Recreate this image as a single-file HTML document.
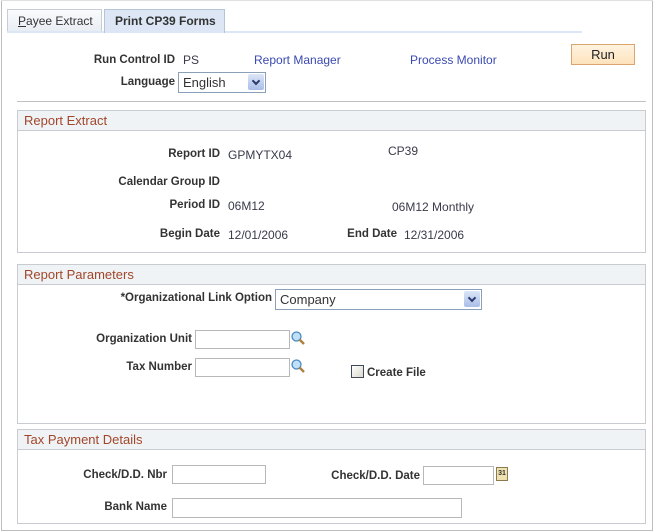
<!DOCTYPE html>
<html><head><meta charset="utf-8"><style>
*{margin:0;padding:0;box-sizing:border-box}
body{width:654px;height:532px;background:#fff;font-family:"Liberation Sans",Arial,sans-serif;font-size:12px;color:#333;position:relative;overflow:hidden}
.a{position:absolute;white-space:nowrap}
.l{position:absolute;white-space:nowrap;font-weight:bold;color:#333;text-align:right;font-size:11.5px;margin-top:1px}
.v{position:absolute;white-space:nowrap;color:#3a3a4a;font-size:12px}
.lk{position:absolute;white-space:nowrap;color:#3a4ab0}
.box{position:absolute;border:1px solid #c8cbcf;background:#fff}
.hd{position:absolute;left:0;right:0;top:0;height:20px;background:#eff3f5;border-bottom:1px solid #c8cbcf;color:#a2462a;font-size:13px;padding:2px 0 0 6px}
.in{position:absolute;border:1px solid #b8b8b8;background:#fff}
.sel{position:absolute;border:1px solid #8a9fb8;background:#fff;font-size:13px;color:#333;padding:2px 0 0 4px}
.dd{position:absolute;right:1px;top:1px;width:16px;height:16px;background:linear-gradient(#dde6f8,#a9bde8);border-radius:2px}
.dd:after{content:"";position:absolute;left:5px;top:4px;width:4px;height:4px;border-right:2px solid #2a3a6a;border-bottom:2px solid #2a3a6a;transform:rotate(45deg)}
.mag{position:absolute;width:14px;height:14px}
</style></head><body>
<div class="a" style="left:1px;top:0;width:652px;height:531px;border:1px solid #bdbdbd;border-top:none"></div>
<div class="a" style="left:1px;top:0;width:652px;height:1px;background:#e0e0e0"></div>
<div class="a" style="left:7px;top:31px;width:575px;height:2px;background:#dce6f5"></div>
<div class="a" style="left:7px;top:9px;width:95px;height:22px;border:1px solid #c6cdd6;border-bottom:none;background:linear-gradient(#fafbfc,#e9eef4);padding:4px 0 0 10px;font-size:12px;color:#333"><u>P</u>ayee Extract</div>
<div class="a" style="left:104px;top:9px;width:121px;height:24px;border:1px solid #b5c4d6;border-bottom:none;background:#dce6f5;padding:4px 0 0 10px;font-size:12px;font-weight:bold;color:#333">Print CP39 Forms</div>
<div class="l" style="right:479px;top:53px">Run Control ID</div>
<div class="v" style="left:183px;top:53px">PS</div>
<div class="lk" style="left:254px;top:53px">Report Manager</div>
<div class="lk" style="left:410px;top:53px">Process Monitor</div>
<div class="a" style="left:571px;top:44px;width:64px;height:21px;border:1px solid #dca56e;background:linear-gradient(#fff3e0,#fde3bc);text-align:center;padding-top:2px;font-size:13px;color:#222">Run</div>
<div class="l" style="right:479px;top:75px">Language</div>
<div class="sel" style="left:178px;top:72px;width:88px;height:21px">English<div class="dd"></div></div>
<div class="a" style="left:17px;top:101px;width:629px;height:1px;background:#c0c0c0"></div>
<div class="box" style="left:17px;top:110px;width:629px;height:143px"><div class="hd">Report Extract</div></div>
<div class="l" style="right:434px;top:147px">Report ID</div>
<div class="v" style="left:228px;top:148px">GPMYTX04</div>
<div class="v" style="left:388px;top:144px">CP39</div>
<div class="l" style="right:434px;top:175px">Calendar Group ID</div>
<div class="l" style="right:434px;top:198px">Period ID</div>
<div class="v" style="left:228px;top:199px">06M12</div>
<div class="v" style="left:392px;top:200px">06M12 Monthly</div>
<div class="l" style="right:434px;top:227px">Begin Date</div>
<div class="v" style="left:228px;top:228px">12/01/2006</div>
<div class="l" style="right:257px;top:227px">End Date</div>
<div class="v" style="left:404px;top:228px">12/31/2006</div>
<div class="box" style="left:17px;top:264px;width:629px;height:160px"><div class="hd">Report Parameters</div></div>
<div class="l" style="right:382px;top:291px">*Organizational Link Option</div>
<div class="sel" style="left:275px;top:289px;width:207px;height:21px">Company<div class="dd"></div></div>
<div class="l" style="right:462px;top:332px">Organization Unit</div>
<div class="in" style="left:195px;top:330px;width:95px;height:19px"></div>
<svg class="mag" style="left:291px;top:331px" viewBox="0 0 14 14"><circle cx="5.5" cy="5.5" r="4.5" fill="#bfe0f8" stroke="#4a88c0" stroke-width="1.3"/><path d="M8.5 8.5L13 13" stroke="#b08040" stroke-width="2.5"/></svg>
<div class="l" style="right:462px;top:360px">Tax Number</div>
<div class="in" style="left:195px;top:358px;width:95px;height:19px"></div>
<svg class="mag" style="left:291px;top:359px" viewBox="0 0 14 14"><circle cx="5.5" cy="5.5" r="4.5" fill="#bfe0f8" stroke="#4a88c0" stroke-width="1.3"/><path d="M8.5 8.5L13 13" stroke="#b08040" stroke-width="2.5"/></svg>
<div class="a" style="left:351px;top:365px;width:13px;height:13px;border:1px solid #3c4a5c;background:linear-gradient(135deg,#fff,#d8d8cc)"></div>
<div class="l" style="left:367px;top:366px;text-align:left">Create File</div>
<div class="box" style="left:17px;top:429px;width:629px;height:95px"><div class="hd">Tax Payment Details</div></div>
<div class="l" style="right:487px;top:468px">Check/D.D. Nbr</div>
<div class="in" style="left:172px;top:465px;width:94px;height:19px"></div>
<div class="l" style="right:234px;top:469px">Check/D.D. Date</div>
<div class="in" style="left:423px;top:466px;width:71px;height:19px"></div>
<div class="a" style="left:496px;top:467px;width:12px;height:14px;background:#f0e2b0;border:1px solid #8a7a50;font-size:7px;font-weight:bold;text-align:center;line-height:12px">31</div>
<div class="l" style="right:487px;top:500px">Bank Name</div>
<div class="in" style="left:172px;top:498px;width:290px;height:20px"></div>
</body></html>
